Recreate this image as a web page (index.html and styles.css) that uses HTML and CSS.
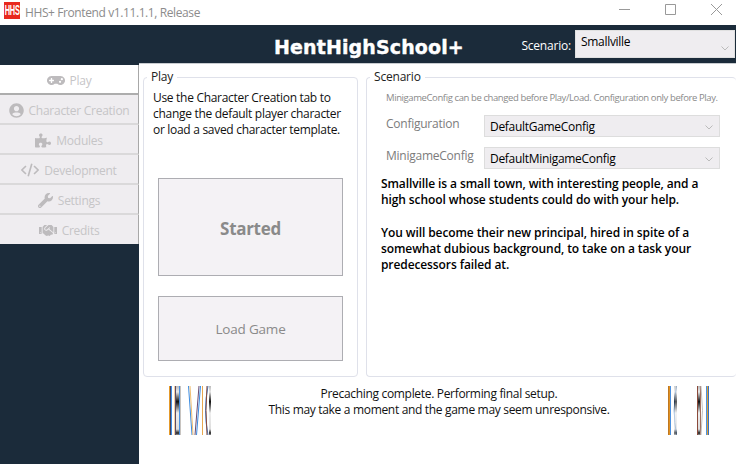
FILE: index.html
```html
<!DOCTYPE html>
<html lang="en">
<head>
<meta charset="utf-8">
<title>HHS+ Frontend</title>
<link rel="stylesheet" href="styles.css">
</head>
<body>
<div class="window">
  <div class="titlebar">
    <div class="logo"><span class="logo-text">HHS</span></div>
    <div class="wintitle">HHS+ Frontend v1.11.1.1, Release</div>
    <div class="winbtns">
      <svg class="winbtn" viewBox="0 0 46 25"><path d="M21 9.500h11" fill="none" stroke="#999"/></svg>
      <svg class="winbtn" viewBox="0 0 46 25"><path d="M21.500 4.500h10v10h-10z" fill="none" stroke="#999"/></svg>
      <svg class="winbtn" viewBox="0 0 46 25"><path d="M21 4l11 11M32 4L21 15" fill="none" stroke="#999"/></svg>
    </div>
  </div>
  <header class="header">
    <h1 class="apptitle">HentHighSchool+</h1>
    <div class="scenario-pick">
      <span class="scenario-label">Scenario:</span>
      <div class="select select-top"><span>Smallville</span>
        <svg class="chev" viewBox="0 0 8 5"><path d="M.5.5L4 4 7.500.5" fill="none" stroke="#bbb"/></svg></div>
    </div>
  </header>
  <div class="body">
    <nav class="sidebar">
      <div class="tab tab-active">
        <svg class="ico ico-pad" viewBox="0 0 640 512"><path d="M480.07 96H160a160 160 0 1 0 114.24 272h91.52A160 160 0 1 0 480.07 96zM248 268a12 12 0 0 1-12 12h-52v52a12 12 0 0 1-12 12h-24a12 12 0 0 1-12-12v-52H84a12 12 0 0 1-12-12v-24a12 12 0 0 1 12-12h52v-52a12 12 0 0 1 12-12h24a12 12 0 0 1 12 12v52h52a12 12 0 0 1 12 12zm216 76a40 40 0 1 1 40-40 40 40 0 0 1-40 40zm64-96a40 40 0 1 1 40-40 40 40 0 0 1-40 40z"/></svg>
        <span>Play</span>
      </div>
      <div class="tab">
        <svg class="ico" viewBox="0 0 496 512"><path d="M248 8C111 8 0 119 0 256s111 248 248 248 248-111 248-248S385 8 248 8zm0 96c48.600 0 88 39.400 88 88s-39.400 88-88 88-88-39.400-88-88 39.400-88 88-88zm0 344c-58.700 0-111.300-26.600-146.500-68.200 18.800-35.400 55.600-59.800 98.500-59.800 2.400 0 4.800.4 7.100 1.100 13 4.200 26.600 6.900 40.900 6.900 14.300 0 28-2.700 40.900-6.900 2.300-.7 4.700-1.100 7.100-1.100 42.900 0 79.700 24.400 98.500 59.800C359.300 421.400 306.700 448 248 448z"/></svg>
        <span>Character Creation</span>
      </div>
      <div class="tab">
        <svg class="ico ico-wide" viewBox="0 0 576 512"><path d="M519.442 288.651c-41.519 0-59.500 31.593-82.058 31.593C377.409 320.244 432 144 432 144s-196.288 80-196.288-3.297c0-35.827 36.288-46.250 36.288-85.985C272 19.216 243.885 0 210.539 0c-34.654 0-66.366 18.891-66.366 56.346 0 41.364 31.711 59.277 31.711 81.750C175.885 207.719 0 166.758 0 166.758v333.237s178.635 41.047 178.635-28.662c0-22.473-40-40.107-40-81.471 0-37.456 29.250-56.346 63.577-56.346 33.673 0 61.788 19.216 61.788 54.717 0 39.735-36.288 50.158-36.288 85.985 0 60.803 129.675 25.730 181.230 25.730 0 0-34.725-120.101 25.827-120.101 35.962 0 46.423 36.152 86.308 36.152C556.712 416 576 387.990 576 354.443c0-34.199-18.962-65.792-56.558-65.792z"/></svg>
        <span>Modules</span>
      </div>
      <div class="tab">
        <svg class="ico ico-code" viewBox="0 0 20 14"><path d="M5.500 2.500L1 7l4.500 4.500M14.500 2.500L19 7l-4.500 4.500M12 0L8 14" fill="none" stroke="#bdbbbd" stroke-width="1.800"/></svg>
        <span>Development</span>
      </div>
      <div class="tab">
        <svg class="ico" viewBox="0 0 512 512"><path d="M507.730 109.100c-2.240-9.030-13.540-12.090-20.120-5.510l-74.360 74.360-67.880-11.310-11.310-67.880 74.360-74.360c6.620-6.620 3.430-17.900-5.660-20.160-47.380-11.740-99.550.91-136.580 37.930-39.640 39.640-50.550 97.100-34.050 147.200L18.740 402.760c-24.990 24.990-24.990 65.510 0 90.500 24.990 24.990 65.510 24.990 90.500 0l213.210-213.210c50.120 16.710 107.470 5.680 147.370-34.220 37.070-37.070 49.700-89.320 37.910-136.730zM64 472c-13.250 0-24-10.750-24-24 0-13.260 10.750-24 24-24s24 10.740 24 24c0 13.250-10.750 24-24 24z"/></svg>
        <span>Settings</span>
      </div>
      <div class="tab tab-last">
        <svg class="ico ico-pad" viewBox="0 0 640 512"><path d="M434.700 64h-85.900c-8 0-15.700 3-21.600 8.400l-98.300 90c-.1.1-.2.3-.3.4-16.600 15.600-16.300 40.500-2.100 56 12.700 13.900 39.400 17.600 56.100 2.700.1-.1.3-.1.4-.2l79.900-73.200c6.500-5.900 16.700-5.500 22.600 1 6 6.500 5.500 16.600-1 22.600l-26.100 23.900L504 313.800c2.900 2.400 5.500 5 7.900 7.700V128l-54.600-54.600c-5.900-6-14.100-9.400-22.600-9.400zM544 128.200v223.900c0 17.700 14.300 32 32 32h64V128.200h-96zm48 223.900c-8.800 0-16-7.200-16-16s7.200-16 16-16 16 7.200 16 16-7.200 16-16 16zM0 384h64c17.700 0 32-14.300 32-32V128.200H0V384zm48-63.900c8.800 0 16 7.200 16 16s-7.200 16-16 16-16-7.200-16-16c0-8.900 7.200-16 16-16zm435.900 18.600L334.600 217.500l-30 27.500c-29.700 27.100-75.200 24.500-101.700-4.400-26.900-29.400-24.800-74.900 4.400-101.700L289.100 64h-83.800c-8.500 0-16.600 3.400-22.600 9.400L128 128v223.900h18.300l90.500 81.900c27.400 22.300 67.700 18.100 90-9.300l.2-.2 17.900 15.500c15.900 13 39.400 10.500 52.300-5.400l31.400-38.600 5.400 4.400c13.700 11.100 33.900 9.100 45-4.700l9.500-11.700c11.200-13.800 9.100-33.900-4.600-45.100z"/></svg>
        <span>Credits</span>
      </div>
    </nav>
    <main class="main">
      <div class="panels">
        <fieldset class="panel panel-play">
          <legend class="legend">Play</legend>
          <p class="play-help">Use the Character Creation tab to change the default player character or load a saved character template.</p>
          <div class="play-btn btn-started">Started</div>
          <div class="play-btn btn-load">Load Game</div>
        </fieldset>
        <fieldset class="panel panel-scenario">
          <legend class="legend">Scenario</legend>
          <p class="scenario-note">MinigameConfig can be changed before Play/Load. Configuration only before Play.</p>
          <div class="config-row">
            <span class="config-label">Configuration</span>
            <div class="select select-config"><span>DefaultGameConfig</span>
              <svg class="chev" viewBox="0 0 8 5"><path d="M.5.5L4 4 7.500.5" fill="none" stroke="#bbb"/></svg></div>
          </div>
          <div class="config-row">
            <span class="config-label">MinigameConfig</span>
            <div class="select select-config"><span>DefaultMinigameConfig</span>
              <svg class="chev" viewBox="0 0 8 5"><path d="M.5.5L4 4 7.500.5" fill="none" stroke="#bbb"/></svg></div>
          </div>
          <div class="desc">
            <p>Smallville is a small town, with interesting people, and a high school whose students could do with your help.</p>
            <p>You will become their new principal, hired in spite of a somewhat dubious background, to take on a task your predecessors failed at.</p>
          </div>
        </fieldset>
      </div>
      <div class="status">
        <svg class="glitch" viewBox="0 0 43 49" preserveAspectRatio="none" fill="none">
          <defs><linearGradient id="g1" x1="0" y1="0" x2="0" y2="1"><stop offset="0" stop-color="#bbb"/><stop offset=".12" stop-color="#e8e8e8"/><stop offset=".32" stop-color="#111"/><stop offset=".55" stop-color="#eee"/><stop offset=".88" stop-color="#ddd"/><stop offset=".96" stop-color="#222"/><stop offset="1" stop-color="#999"/></linearGradient></defs>
          <rect x="0" width="1" height="49" fill="#e59a2a"/><rect x="1" width="1" height="49" fill="#4a4058"/><rect x="2" width="1" height="49" fill="#3d8fe6"/>
          <rect x="5" width="1" height="49" fill="#f3cfa0"/><rect x="6" width="1" height="49" fill="#5a4b66"/><rect x="7" width="3" height="49" fill="url(#g1)"/><rect x="10" width="1" height="49" fill="#4a90e0"/><rect x="11" width="1" height="49" fill="#c8c4c0"/>
          <path d="M19.500 0L23 49" stroke="#3b8be0"/><path d="M21 0L24 49" stroke="#f0bd70"/><path d="M30 0L26 49" stroke="#6a4a70"/><path d="M31.500 0L27.500 49" stroke="#3b8be0"/><path d="M33.500 0L33.500 49" stroke="#e8a850"/>
          <path d="M39 0Q34 24 39 49" stroke="#3a80d0"/><path d="M38 0Q36 24 38 49" stroke="#8a4a3a"/><rect x="40" width="2" height="49" fill="url(#g1)"/>
        </svg>
        <div class="status-text">Precaching complete. Performing final setup.<br>This may take a moment and the game may seem unresponsive.</div>
        <svg class="glitch" viewBox="0 0 43 49" preserveAspectRatio="none" fill="none">
          <rect x="0" width="1" height="49" fill="#c07820"/><rect x="1" width="1" height="49" fill="#e09020"/><rect x="2" width="1" height="49" fill="#4a90e0"/>
          <path d="M8.500 0Q4 24 8.500 49" stroke="#3a80d0"/><rect x="6" width="3" height="49" fill="url(#g1)" opacity=".7"/>
          <rect x="29" width="1" height="49" fill="#8a4a3a"/><rect x="30" width="2" height="49" fill="url(#g1)"/><rect x="32" width="1" height="49" fill="#a07060"/>
          <path d="M33 0Q36 24 33 49" stroke="#c0c0c0"/><rect x="38" width="1" height="49" fill="#4a90e0"/><rect x="39" width="1" height="49" fill="#e0a030"/><rect x="40" width="1" height="49" fill="#3a70c0"/>
        </svg>
      </div>
    </main>
  </div>
</div>
</body>
</html>
```
FILE: styles.css
```css
* { box-sizing: border-box; }
html, body { margin: 0; padding: 0; }
body {
  width: 736px;
  height: 464px;
  overflow: hidden;
  font-family: "Open Sans", "Noto Sans", sans-serif;
  background: #fff;
  color: #000;
}
.window { display: flex; flex-direction: column; height: 464px; }

.titlebar { display: flex; align-items: center; height: 25px; background: #fff; flex: none; }
.logo {
  display: flex; align-items: center; justify-content: center;
  width: 16px; height: 17px; margin: -5px 0 0 4px;
  background: #e8281e; color: #fff;
  font: bold 9px/9px "Liberation Sans", sans-serif;
  overflow: hidden;
}
.logo-text { display: block; transform: scale(.82, 1.7); letter-spacing: -.2px; }
.wintitle { margin-left: 5px; font-size: 12px; color: #8c8c8c; letter-spacing: -.4px; }
.winbtns { display: flex; margin-left: auto; }
.winbtn { width: 46px; height: 25px; display: block; }

.header {
  display: flex; align-items: center; height: 38px; flex: none;
  background: #1b2b3a; color: #fff;
}
.apptitle {
  margin: 6px 0 0 274px;
  font: bold 19px/32px "DejaVu Sans", sans-serif;
  letter-spacing: .13px;
  -webkit-text-stroke: .4px #fff;
  color: #fff;
}
.scenario-pick { display: flex; align-items: center; margin-left: auto; margin-right: 1px; }
.scenario-label { font-size: 12px; margin-right: 4px; letter-spacing: -.2px; margin-top: 2px; }

.select {
  display: flex; justify-content: space-between;
  background: #efedf0; color: #000;
  font-size: 12px;
  letter-spacing: -.3px;
}
.select-top { width: 160px; height: 28px; padding: 2px 5px 0; border: 1px solid #e0e0e0; }
.select-config { width: 236px; height: 22px; padding: 2px 5px 0; border: 1px solid #ddd; }
.chev { width: 8px; height: 5px; margin: 7px 1px 0 0; flex: none; }
.select-top .chev { margin-top: 13px; margin-right: 0; }

.body { display: flex; flex: 1; min-height: 0; background: #1b2b3a; }
.sidebar { width: 139px; flex: none; padding-top: 2px; }
.tab {
  display: flex; align-items: center; justify-content: center; gap: 5px;
  height: 30px;
  padding: 2px 0 0 0;
  background: #efedf0;
  border-bottom: 2px solid #dad9da;
  border-right: 1px solid #a8a8a8;
  color: #c6c5c7;
  font-size: 12px;
  letter-spacing: -.27px;
}
.tab-active { background: #fff; border-bottom-color: #adadad; }
.tab-last { border-bottom: 0; height: 29px; }
.ico { width: 15px; height: 15px; fill: #bdbbbd; flex: none; }
.ico-pad { width: 18px; }
.ico-wide { width: 16px; }
.ico-code { width: 18px; height: 14px; }

.main {
  flex: 1; min-width: 0;
  display: flex; flex-direction: column;
  background: #fff;
  border-top: 1px solid #c8ccd0;
  padding: 5px 0 0 4px;
}
.panels { display: flex; gap: 8px; height: 308px; flex: none; }
.panel {
  margin: 0; min-width: 0;
  border: 1px solid #dfe1ea;
  border-radius: 4px;
  padding: 0;
  height: 308px;
}
.panel-play { width: 215px; padding: 0 0 0 9px; }
.panel-scenario { flex: 1; border-right-width: 0; padding: 0 0 0 19px; }
.legend { padding: 0 4px; margin-left: -6px; font-size: 12px; line-height: 16px; color: #222; letter-spacing: -.2px; }
.panel-scenario .legend { margin-left: -16px; }
.play-help { margin: 5px 0 0; width: 196px; font-size: 12px; line-height: 16px; letter-spacing: -.3px; color: #111; }
.play-btn {
  display: flex; align-items: center; justify-content: center;
  width: 185px; margin-left: 5px;
  background: #f4f2f5;
  border: 1px solid #adadb2;
  color: #8a8a8a;
}
.btn-started { height: 98px; margin-top: 40px; padding-top: 2px; font-size: 17px; font-weight: 700; letter-spacing: -.3px; }
.btn-load { height: 65px; margin-top: 20px; font-size: 13.5px; letter-spacing: -.2px; }

.scenario-note { margin: 6px 0 0; font-size: 9.5px; line-height: 14px; color: #8a8a8a; letter-spacing: -.4px; white-space: nowrap; }
.config-row { display: flex; align-items: center; margin-top: 10px; }
.config-label { width: 98px; flex: none; margin-top: -6px; font-size: 12px; color: #7c7c7c; letter-spacing: -.25px; }
.desc { margin: 7px 0 0 -5px; width: 325px; font-size: 12px; font-weight: 600; line-height: 16.25px; letter-spacing: -.1px; color: #000; }
.desc p { margin: 0 0 16.25px; }

.status { display: flex; align-items: flex-start; margin-left: 26px; margin-top: 9px; }
.glitch { width: 43px; height: 49px; flex: none; display: block; }
.status-text { width: 456px; padding-right: 2px; text-align: center; font-size: 12px; line-height: 16px; color: #111; letter-spacing: -.32px; }
```
